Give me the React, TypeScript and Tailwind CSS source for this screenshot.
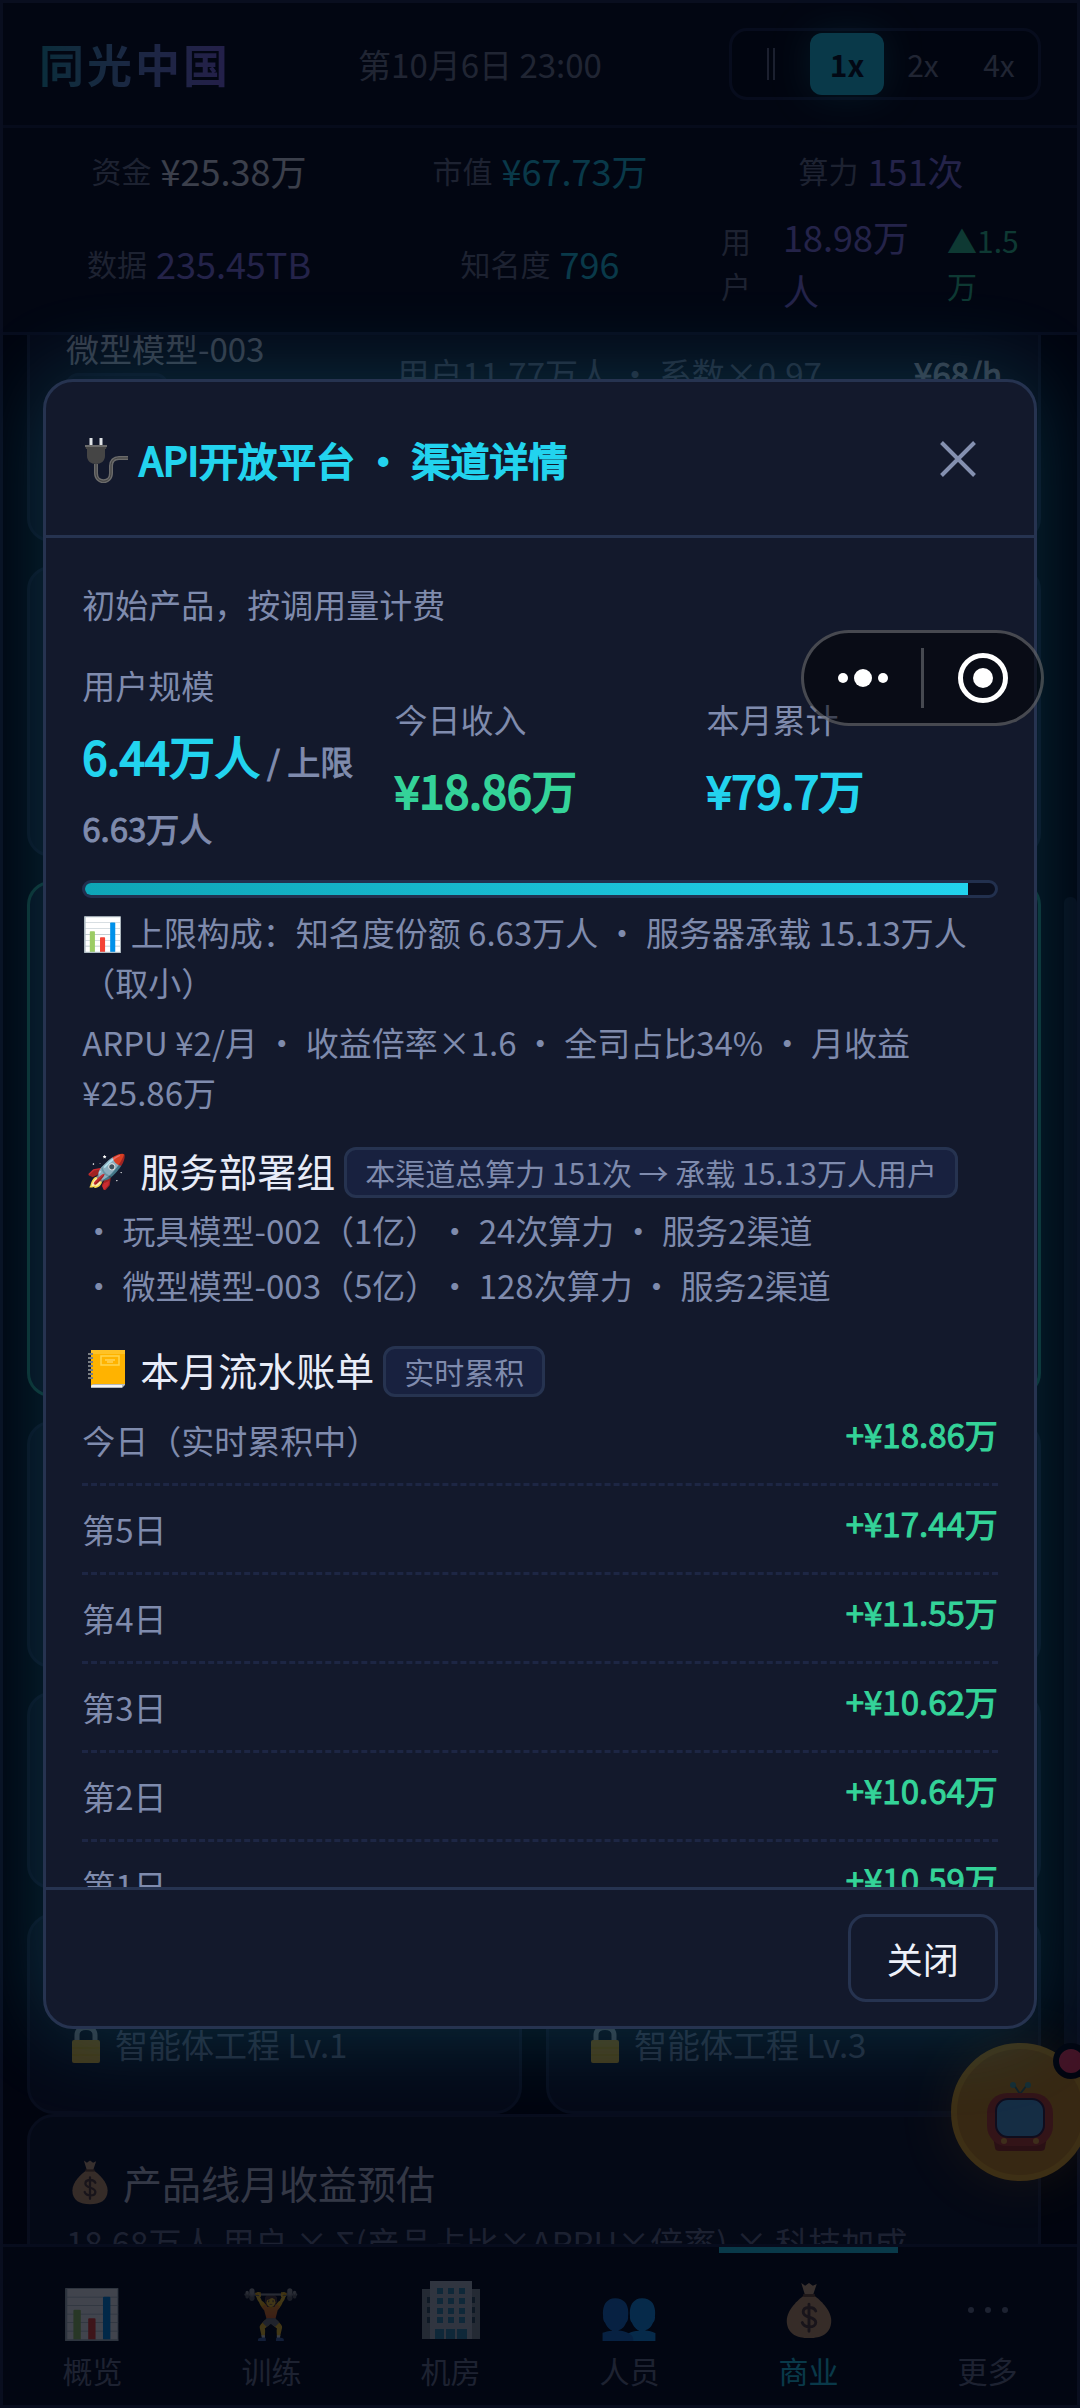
import { useState } from 'react';

const stats = [
  { label: '资金', value: '¥25.38万', color: 'text-[#e8ecf8]' },
  { label: '市值', value: '¥67.73万', color: 'text-[#22d3ee]' },
  { label: '算力', value: '151次', color: 'text-[#8b7cf0]' },
  { label: '数据', value: '235.45TB', color: 'text-[#8b7cf0]' },
  { label: '知名度', value: '796', color: 'text-[#22d3ee]' },
];

const speeds = ['1x', '2x', '4x'];

const ledger = [
  { day: '今日（实时累积中）', amount: '+¥18.86万' },
  { day: '第5日', amount: '+¥17.44万' },
  { day: '第4日', amount: '+¥11.55万' },
  { day: '第3日', amount: '+¥10.62万' },
  { day: '第2日', amount: '+¥10.64万' },
  { day: '第1日', amount: '+¥10.59万' },
];

const deployments = [
  '· 玩具模型-002（1亿）· 24次算力 · 服务2渠道',
  '· 微型模型-003（5亿）· 128次算力 · 服务2渠道',
];

function PlugIcon() {
  return (
    <svg className="h-[48px] w-[48px]" viewBox="0 0 48 48" fill="none">
      <path d="M9 3v9M19 3v9" stroke="#dfe3e6" strokeWidth="3" />
      <path d="M14 29v9c0 11 15 11 15 0v-7c0-5 3-8 8-8h9" stroke="#6b6b6b" strokeWidth="4" />
      <path d="M14 29v9c0 11 15 11 15 0v-7c0-5 3-8 8-8h9" stroke="#3d3d3d" strokeWidth="1" />
      <path d="M3 10h22l-1 4h-1v7c0 5-4 8-9 8s-9-3-9-8v-7H4z" fill="#454545" />
      <path d="M3 11h22" stroke="#6b6b6b" strokeWidth="2" />
    </svg>
  );
}

function LedgerIcon() {
  return (
    <svg className="h-[40px] w-[40px]" viewBox="0 0 40 40" fill="none">
      <path d="M4 4h34v32l-3 3H4z" fill="#b5b9bd" />
      <path d="M4 36h31v2H4z" fill="#f3f3f3" />
      <path d="M4 1h34v34H7c-2 0-3 1-3 3z" fill="#ffb300" />
      <path d="M4 1h34v4H4z" fill="#ffc226" />
      <rect x="14" y="7" width="18" height="9" stroke="#ffd54f" strokeWidth="1.500" />
      <path d="M18 11h10M20 13h6" stroke="#ffe082" />
      <path d="M1 5h5M1 9h5M1 13h5M1 17h5M1 21h5M1 25h5M1 29h5" stroke="#7a7f85" strokeWidth="2" />
    </svg>
  );
}

function LockIcon() {
  return (
    <svg className="h-[40px] w-[40px]" viewBox="0 0 40 40" fill="none">
      <path d="M11 18v-7c0-10 18-10 18 0v7" stroke="#b8c0c6" strokeWidth="5" />
      <rect x="6" y="16" width="28" height="23" rx="2" fill="#fbc02d" />
      <path d="M6 24h28M6 31h28" stroke="#f4b400" />
    </svg>
  );
}

function MoneyBagIcon({ className }: { className: string }) {
  return (
    <svg className={className} viewBox="0 0 60 60" fill="none">
      <path d="M22 2l4 3 4-3 4 3 4-2-4 12h-8z" fill="#d9ae84" />
      <path d="M25 15c-6 4-18 15-18 26 0 13 10 18 23 18s23-5 23-18c0-11-12-22-18-26z" fill="#d2a06d" />
      <path d="M24 15h12" stroke="#7a5033" strokeWidth="3" />
      <path
        d="M37 31c-2-5-13-5-13 1 0 7 13 4 13 11 0 6-12 6-14 0M30 24v28"
        stroke="#5d4037"
        strokeWidth="3"
        strokeLinecap="round"
      />
    </svg>
  );
}

function BuildingIcon() {
  return (
    <svg className="h-[58px] w-[58px]" viewBox="0 0 58 58">
      <path d="M0 8h58v50H0z" fill="#8d979c" />
      <path d="M8 0h42v58H8z" fill="#bcc4ca" />
      <path d="M5 16h3v6H5zm0 10h3v6H5zm0 10h3v6H5zM50 16h3v6h-3zm0 10h3v6h-3zm0 10h3v6h-3z" fill="#37565f" />
      <path
        d="M15 7h6v6h-6zm11 0h6v6h-6zm11 0h6v6h-6zM15 17h6v6h-6zm11 0h6v6h-6zm11 0h6v6h-6zM15 27h6v6h-6zm11 0h6v6h-6zm11 0h6v6h-6zM15 36h6v6h-6zm11 0h6v6h-6zm11 0h6v6h-6zM13 48h9v10h-9zm11 0h9v10h-9zm11 0h10v10H35z"
        fill="#3a8fae"
      />
    </svg>
  );
}

function TvIcon() {
  return (
    <svg className="h-[70px] w-[66px]" viewBox="0 0 66 70" fill="none">
      <path d="M33 13L27 4M33 13l7-9" stroke="#3f6f6c" strokeWidth="2" />
      <circle cx="26" cy="4" r="3" fill="#4fa39a" />
      <circle cx="41" cy="4" r="3" fill="#4fa39a" />
      <path d="M6 56h54l-2 11c0 2-2 3-4 3H12c-2 0-4-1-4-3z" fill="#a5321f" />
      <rect x="0" y="12" width="66" height="53" rx="20" fill="#c8402e" />
      <rect x="9" y="18" width="48" height="38" rx="12" fill="#4fa3dc" stroke="#3c2440" strokeWidth="2" />
      <circle cx="17" cy="60" r="3" fill="#f2a73b" />
      <circle cx="49" cy="60" r="3" fill="#f2a73b" />
    </svg>
  );
}

function MoreIcon() {
  return (
    <svg width="44" height="8" viewBox="0 0 44 8" fill="currentColor">
      <circle cx="5" cy="4" r="3" />
      <circle cx="22" cy="4" r="3" />
      <circle cx="39" cy="4" r="3" />
    </svg>
  );
}

const tabs = [
  { icon: '📊', label: '概览' },
  { icon: '🏋️', label: '训练' },
  { icon: <BuildingIcon />, label: '机房' },
  { icon: '👥', label: '人员' },
  { icon: <MoneyBagIcon className="h-[58px] w-[58px]" />, label: '商业' },
  { icon: <MoreIcon />, label: '更多' },
];

function Header() {
  const [speed, setSpeed] = useState('1x');

  return (
    <header className="flex h-[125px] items-center justify-between border-b-[3px] border-[#161f38] px-[36px]">
      <h1 className="bg-gradient-to-r from-[#22a3b8] to-[#8b6cf0] bg-clip-text text-[45px] leading-[60px] font-bold tracking-[3px] text-transparent">
        同光中国
      </h1>
      <time className="text-[33px] leading-[50px] text-[#7e8499]">第10月6日 23:00</time>
      <div className="flex gap-[2px] rounded-[18px] border-[3px] border-[#1b2340] bg-[#03050c] p-[2px]">
        <button type="button" aria-label="暂停" className="flex h-[62px] w-[74px] items-center justify-center">
          <svg width="8" height="32" viewBox="0 0 8 32" stroke="#6b7189" strokeWidth="2">
            <path d="M1 0v32M7 0v32" />
          </svg>
        </button>
        {speeds.map((s) => (
          <button
            key={s}
            type="button"
            onClick={() => setSpeed(s)}
            className={
              s === speed
                ? 'h-[62px] w-[74px] rounded-[12px] bg-[#22d3ee] text-[30px] font-bold text-[#04121c] shadow-[0_0_36px_rgba(34,211,238,0.35)]'
                : 'h-[62px] w-[74px] text-[30px] text-[#7e8499]'
            }
          >
            {s}
          </button>
        ))}
      </div>
    </header>
  );
}

function StatsBar() {
  return (
    <section className="grid grid-cols-3 gap-x-[21px] gap-y-[12px] border-b-[3px] border-[#1b2340] px-[36px] py-[15px]">
      {stats.map((s) => (
        <div key={s.label} className="flex items-center justify-center gap-[9px]">
          <span className="text-[30px] leading-[45px] text-[#70778f]">{s.label}</span>
          <span className={`text-[36px] leading-[54px] ${s.color}`}>{s.value}</span>
        </div>
      ))}
      <div className="flex items-center justify-between">
        <span className="w-[30px] text-[30px] leading-[45px] text-[#70778f]">用户</span>
        <span className="w-[132px] text-[36px] leading-[54px] text-[#8b7cf0]">18.98万人</span>
        <span className="w-[94px] text-[30px] leading-[45px] text-[#34d399]">▲1.5万</span>
      </div>
    </section>
  );
}

function Main() {
  return (
    <main className="relative flex min-h-0 flex-1 flex-col overflow-hidden bg-[#020308] px-[24px]">
      <div className="-mt-[27px] mr-[12px] flex shrink-0 flex-col">
        <div className="mb-[24px] flex h-[234px] items-start justify-between rounded-[24px] border-[3px] border-[#1c2642] bg-[#101628] px-[36px] pt-[12px]">
          <div>
            <p className="text-[33px] leading-[50px] text-[#c9d0e2]">微型模型-003</p>
            <div className="h-[51px] w-[102px] rounded-[12px] border-[3px] border-[#222c4d] bg-[#18213f]" />
          </div>
          <p className="mt-[25px] ml-[40px] text-[33px] leading-[50px] text-[#7e88a8]">用户11.77万人 · 系数×0.97</p>
          <p className="mt-[25px] text-[33px] leading-[50px] text-[#c9d0e2] [-webkit-text-stroke:1px]">¥68/h</p>
        </div>
        <div className="mb-[24px] h-[291px] rounded-[24px] border-[3px] border-[#1c2642] bg-[#101628]" />
        <div className="mb-[24px] h-[516px] rounded-[24px] border-[3px] border-[#34d399]/70 bg-[#101628]" />
        <div className="mb-[24px] h-[247px] rounded-[24px] border-[3px] border-[#1c2642] bg-[#101628]" />
        <div className="mb-[24px] h-[197px] rounded-[24px] border-[3px] border-[#1c2642] bg-[#101628]" />
        <div className="grid grid-cols-2 gap-[24px]">
          {['智能体工程 Lv.1', '智能体工程 Lv.3'].map((name) => (
            <div
              key={name}
              className="flex h-[201px] items-end rounded-[27px] border-[3px] border-[#1c2642] bg-[#101628] px-[36px] pb-[42px]"
            >
              <p className="flex items-center gap-[9px] text-[33px] leading-[50px] text-[#7e88a8]">
                <LockIcon />
                {name}
              </p>
            </div>
          ))}
        </div>
        <div className="h-[240px] rounded-[27px] border-[3px] border-[#1c2642] bg-[#0e1424] px-[36px] pt-[36px]">
          <h2 className="flex items-center gap-[9px] text-[39px] leading-[58px] text-[#c9d0e2]">
            <MoneyBagIcon className="h-[46px] w-[48px]" />
            产品线月收益预估
          </h2>
          <p className="mt-[6px] text-[33px] leading-[50px] text-[#6b7391]">
            18.68万人 用户 × Σ(产品占比×ARPU×倍率) × 科技加成
          </p>
        </div>
      </div>
      <div className="absolute top-[562px] right-0 h-[1250px] w-[13px] rounded-t-[6px] bg-[#141c33]" />
    </main>
  );
}

function TabBar() {
  return (
    <nav className="grid h-[161px] grid-cols-6 border-t-[3px] border-[#1b2340]">
      {tabs.map((t) => {
        const active = t.label === '商业';
        return (
          <a
            key={t.label}
            href="#"
            className={
              active
                ? 'flex flex-col items-center border-t-[6px] border-[#22d3ee] pt-[21px] text-[#22d3ee]'
                : 'flex flex-col items-center border-t-[6px] border-transparent pt-[21px] text-[#70778f]'
            }
          >
            <span className="flex h-[72px] items-center text-[48px] leading-[72px]">{t.icon}</span>
            <span className="mt-[2px] text-[30px] leading-[45px]">{t.label}</span>
          </a>
        );
      })}
    </nav>
  );
}

function Badge({ children }: { children: string }) {
  return (
    <span className="mt-[6px] rounded-[12px] border-[3px] border-[#263350] bg-[#18213f] px-[18px] text-[30px] leading-[45px] text-[#7f8bad]">
      {children}
    </span>
  );
}

function ChannelDialog() {
  return (
    <div
      role="dialog"
      aria-label="渠道详情"
      className="flex w-[92%] flex-col overflow-hidden rounded-[30px] border-[3px] border-[#263350] bg-[#13192c] shadow-[0_0_90px_rgba(34,211,238,0.2)]"
    >
      <div className="flex h-[156px] shrink-0 items-center justify-between border-b-[3px] border-[#263350] px-[36px]">
        <h2 className="flex items-center gap-[9px] text-[39px] leading-[58px] text-[#22d3ee] [-webkit-text-stroke:2px]">
          <PlugIcon />
          API开放平台 · 渠道详情
        </h2>
        <button type="button" aria-label="关闭弹窗" className="flex h-[80px] w-[80px] items-center justify-center">
          <svg width="36" height="36" viewBox="0 0 36 36" stroke="#8490b0" strokeWidth="4">
            <path d="M1.500 1.500l33 33M34.500 1.500l-33 33" />
          </svg>
        </button>
      </div>

      <div className="max-h-[56vh] overflow-y-auto px-[36px] pt-[36px] text-[33px] text-[#7f8bad] [scrollbar-width:none]">
        <p className="leading-[60px]">初始产品，按调用量计费</p>

        <div className="mt-[26px] grid grid-cols-3 items-center gap-[21px]">
          <div>
            <p className="leading-[50px]">用户规模</p>
            <p className="mt-[12px] text-[45px] leading-[67px] text-[#22d3ee] [-webkit-text-stroke:2px]">
              6.44万人
              <span className="text-[33px] leading-none text-[#7f8bad] [-webkit-text-stroke:1px]"> / 上限 6.63万人</span>
            </p>
          </div>
          <div>
            <p className="leading-[50px]">今日收入</p>
            <p className="mt-[12px] text-[45px] leading-[67px] text-[#34d399] [-webkit-text-stroke:2px]">¥18.86万</p>
          </div>
          <div>
            <p className="leading-[50px]">本月累计</p>
            <p className="mt-[12px] text-[45px] leading-[67px] text-[#22d3ee] [-webkit-text-stroke:2px]">¥79.7万</p>
          </div>
        </div>

        <div className="mt-[24px] h-[18px] overflow-hidden rounded-full border-[3px] border-[#22304e] bg-[#0b1020]">
          <div className="h-full w-[97%] bg-gradient-to-r from-[#0ea5b7] to-[#22d3ee]" />
        </div>
        <p className="mt-[9px] leading-[50px]">📊 上限构成：知名度份额 6.63万人 · 服务器承载 15.13万人（取小）</p>
        <p className="mt-[10px] leading-[50px]">ARPU ¥2/月 · 收益倍率×1.6 · 全司占比34% · 月收益 ¥25.86万</p>

        <h3 className="mt-[24px] flex items-center gap-[9px] text-[39px] leading-[56px] text-[#e8ecf8]">
          <span className="w-[49px] text-center text-[33px] leading-none">🚀</span>
          服务部署组
          <Badge>本渠道总算力 151次 → 承载 15.13万人用户</Badge>
        </h3>
        <ul className="mt-[2px] [text-spacing-trim:space-all]">
          {deployments.map((d) => (
            <li key={d} className="pt-[5px] leading-[50px]">
              {d}
            </li>
          ))}
        </ul>

        <h3 className="mt-[30px] flex items-center gap-[9px] text-[39px] leading-[56px] text-[#e8ecf8]">
          <span className="flex w-[49px] justify-center">
            <LedgerIcon />
          </span>
          本月流水账单
          <Badge>实时累积</Badge>
        </h3>
        <ul>
          {ledger.map((row) => (
            <li key={row.day} className="flex items-start justify-between border-b-[3px] border-dashed border-[#1d2644] py-[18px]">
              <span className="leading-[50px]">{row.day}</span>
              <span className="leading-[39px] text-[#34d399] [-webkit-text-stroke:1px]">{row.amount}</span>
            </li>
          ))}
        </ul>
      </div>

      <div className="flex shrink-0 justify-end border-t-[3px] border-[#263350] px-[36px] py-[24px]">
        <button
          type="button"
          className="h-[88px] rounded-[18px] border-[3px] border-[#263350] px-[36px] text-[36px] text-[#eef1fa]"
        >
          关闭
        </button>
      </div>
    </div>
  );
}

// floating mini-program menu
function Capsule() {
  return (
    <div className="absolute top-[630px] right-[36px] flex h-[96px] w-[243px] items-center rounded-full border-[3px] border-white/25 bg-black/50">
      <button type="button" aria-label="菜单" className="flex flex-1 justify-center">
        <svg width="52" height="20" viewBox="0 0 52 20" fill="#fff">
          <circle cx="6" cy="10" r="5" />
          <circle cx="26" cy="10" r="9" />
          <circle cx="46" cy="10" r="5" />
        </svg>
      </button>
      <span className="h-[60px] w-[3px] bg-white/25" />
      <button type="button" aria-label="退出" className="flex flex-1 justify-center">
        <svg width="50" height="50" viewBox="0 0 50 50">
          <circle cx="25" cy="25" r="22.500" fill="none" stroke="#fff" strokeWidth="5" />
          <circle cx="25" cy="25" r="10" fill="#fff" />
        </svg>
      </button>
    </div>
  );
}

export default function App() {
  return (
    <div className="relative h-screen overflow-hidden bg-[#050914] font-['Noto_Sans_CJK_SC','Noto_Color_Emoji',sans-serif]">
      <div className="flex h-full flex-col border-[3px] border-[#20294a]">
        <Header />
        <StatsBar />
        <Main />
        <TabBar />
      </div>

      <button
        type="button"
        aria-label="直播"
        className="absolute -right-[9px] bottom-[227px] flex h-[138px] w-[138px] items-center justify-center rounded-full border-[6px] border-[#f0aa20] bg-[#d88f18] pt-[8px] shadow-[0_0_48px_rgba(245,158,11,0.3)]"
      >
        <TvIcon />
        <span className="absolute -top-[6px] right-[-6px] h-[36px] w-[36px] rounded-full border-[6px] border-[#04060f] bg-[#ff3b5c]" />
      </button>

      <div className="absolute inset-0 flex items-center justify-center bg-[#020612]/75">
        <ChannelDialog />
      </div>
      <Capsule />
    </div>
  );
}
